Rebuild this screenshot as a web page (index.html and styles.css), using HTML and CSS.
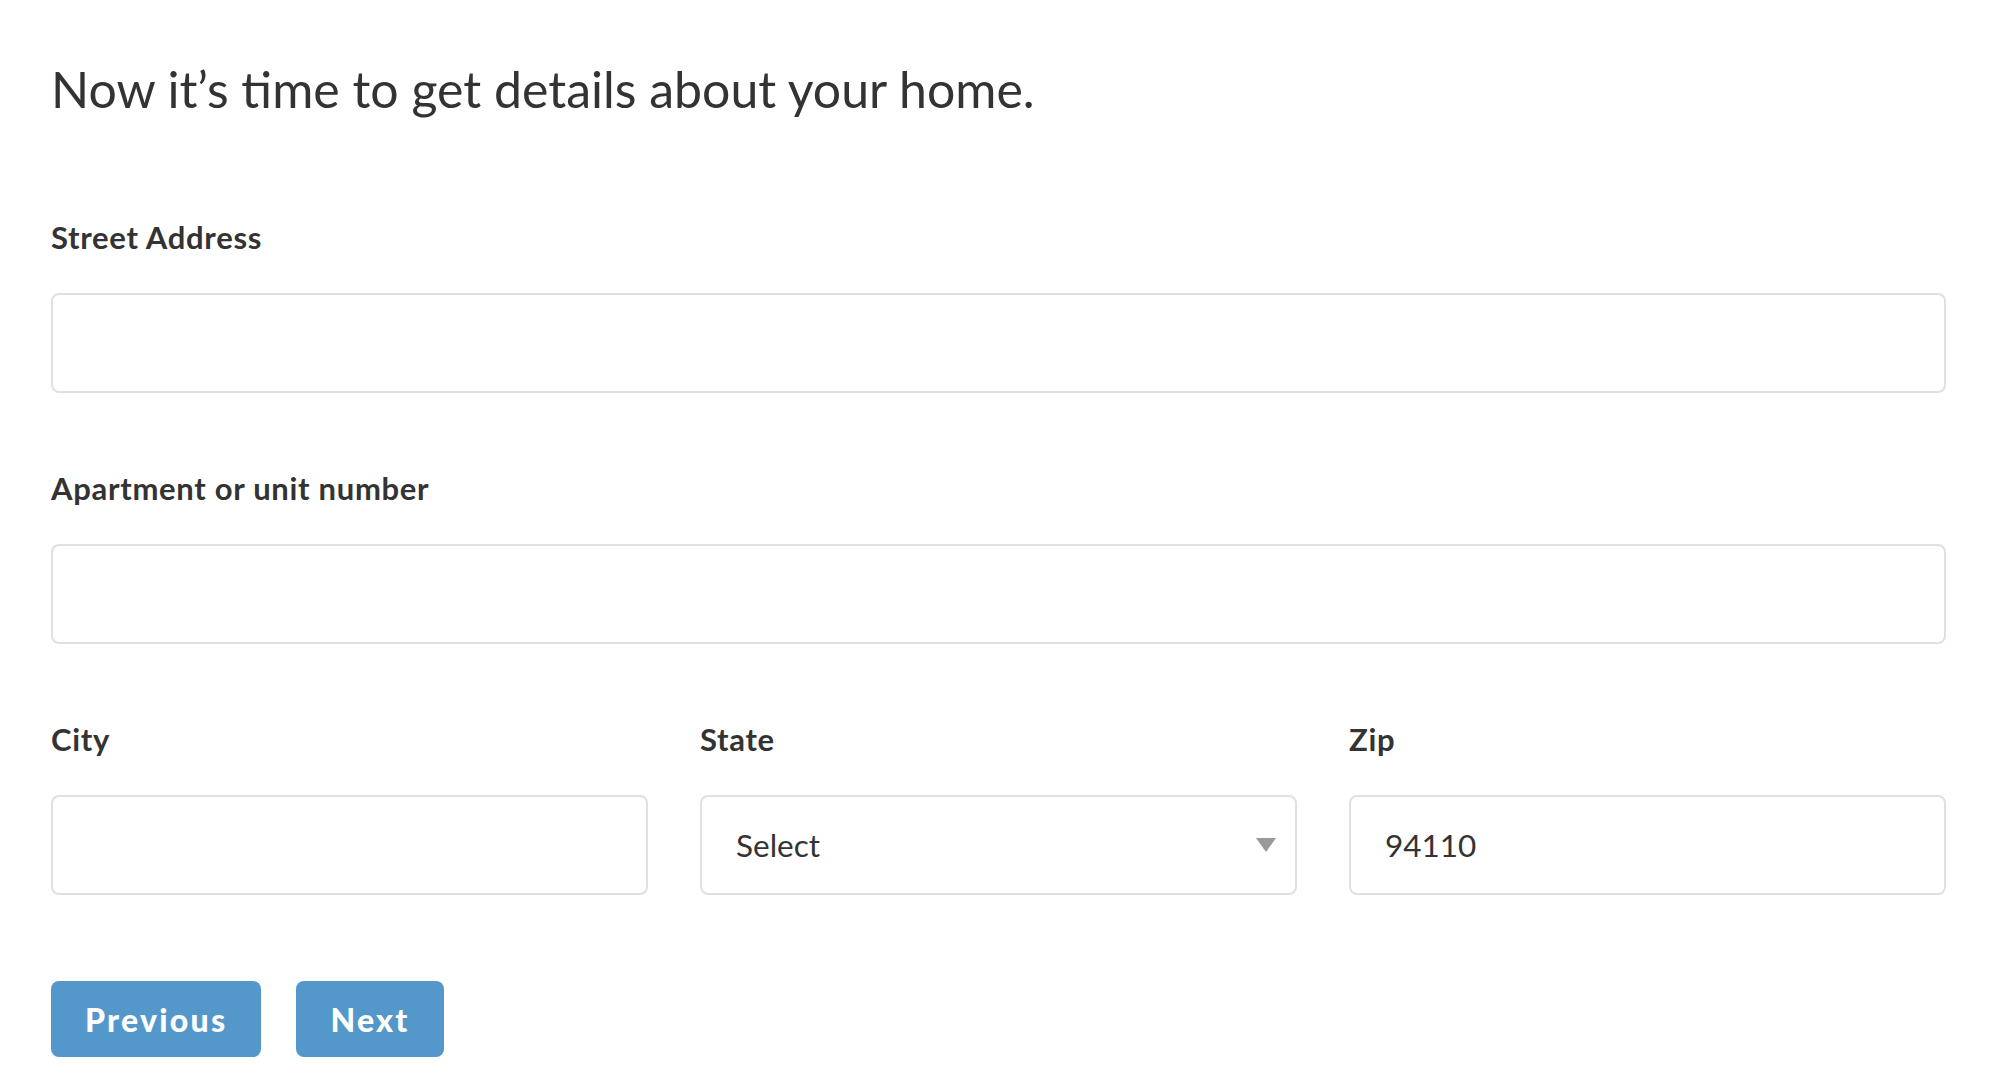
FILE: index.html
```html
<!DOCTYPE html>
<html lang="en">
<head>
<meta charset="utf-8">
<title>Home details</title>
<link rel="stylesheet" href="styles.css">
</head>
<body>
<main class="page">
  <h1 class="title">Now it’s time to get details about your home.</h1>
  <form class="form">
    <div class="field">
      <label class="label" for="street">Street Address</label>
      <input class="input" id="street" type="text">
    </div>
    <div class="field">
      <label class="label" for="apt">Apartment or unit number</label>
      <input class="input" id="apt" type="text">
    </div>
    <div class="row">
      <div class="field">
        <label class="label" for="city">City</label>
        <input class="input" id="city" type="text">
      </div>
      <div class="field">
        <label class="label" for="state">State</label>
        <div class="select-wrap">
          <select class="input select" id="state">
            <option>Select</option>
          </select>
          <svg class="caret" width="20" height="14" viewBox="0 0 20 14" aria-hidden="true"><path d="M0 0 H20 L10 14 Z" fill="#999"/></svg>
        </div>
      </div>
      <div class="field">
        <label class="label" for="zip">Zip</label>
        <input class="input" id="zip" type="text" value="94110">
      </div>
    </div>
    <div class="actions">
      <button class="btn" type="button">Previous</button>
      <button class="btn" type="button">Next</button>
    </div>
  </form>
</main>
</body>
</html>
```
FILE: styles.css
```css
html, body {
  margin: 0;
  padding: 0;
  background: #ffffff;
}
body {
  font-family: "Lato", "Open Sans", "Liberation Sans", sans-serif;
  color: #333333;
}
.page {
  width: 1895px;
  margin-left: 51px;
  padding-top: 59px;
}
.title {
  margin: 0;
  font-size: 50px;
  line-height: 60px;
  font-weight: 400;
  color: #333333;
}
.form {
  margin-top: 100px;
}
.field {
  display: flex;
  flex-direction: column;
  margin-bottom: 77px;
}
.label {
  font-size: 31px;
  line-height: 36px;
  font-weight: 700;
  letter-spacing: 0.7px;
  color: #333333;
  margin-bottom: 38px;
}
.input {
  box-sizing: border-box;
  width: 100%;
  height: 100px;
  border: 2px solid #e0e0e0;
  border-radius: 8px;
  background: #ffffff;
  padding: 0 34px;
  font-family: "Lato", "Open Sans", "Liberation Sans", sans-serif;
  font-size: 31.5px;
  color: #333333;
  outline: none;
  margin: 0;
}
.row {
  display: grid;
  grid-template-columns: repeat(3, 1fr);
  column-gap: 52px;
}
.row .field {
  margin-bottom: 86px;
}
.select-wrap {
  position: relative;
}
.select {
  appearance: none;
  -webkit-appearance: none;
}
.caret {
  position: absolute;
  right: 21px;
  top: 43px;
  pointer-events: none;
}
.actions {
  display: flex;
  gap: 35px;
}
.btn {
  height: 76px;
  padding: 0 34px;
  border: none;
  border-radius: 8px;
  background: #5397cb;
  color: #ffffff;
  font-family: "Lato", "Open Sans", "Liberation Sans", sans-serif;
  font-size: 32px;
  font-weight: 900;
  letter-spacing: 2.25px;
}
```
